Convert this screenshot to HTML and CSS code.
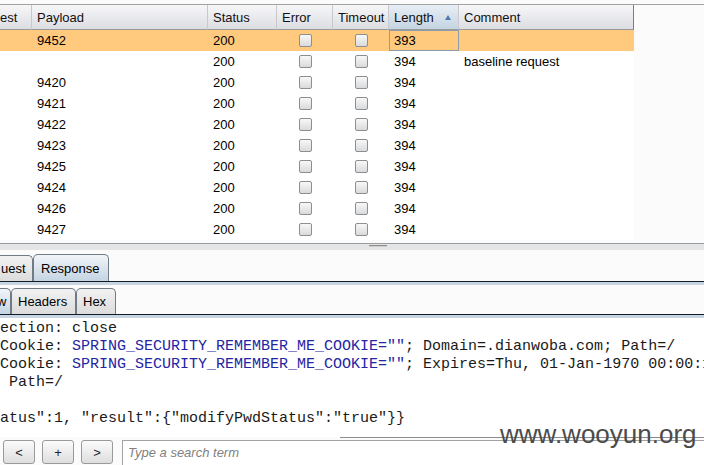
FILE: index.html
```html
<!DOCTYPE html>
<html>
<head>
<meta charset="utf-8">
<link rel="stylesheet" href="styles.css">
</head>
<body>
<div class="app">
  <div class="results">
    <div class="table-wrap">
      <div class="table">
        <div class="grid head">
          <div class="hc first">est</div>
          <div class="hc">Payload</div>
          <div class="hc">Status</div>
          <div class="hc">Error</div>
          <div class="hc">Timeout</div>
          <div class="hc sorted">Length<span class="arrow"></span></div>
          <div class="hc last">Comment</div>
        </div>
        <div class="grid row sel"><div></div><div>9452</div><div>200</div><div class="c"><span class="cb"></span></div><div class="c"><span class="cb"></span></div><div class="focus">393</div><div></div></div>
        <div class="grid row"><div></div><div></div><div>200</div><div class="c"><span class="cb"></span></div><div class="c"><span class="cb"></span></div><div>394</div><div>baseline request</div></div>
        <div class="grid row"><div></div><div>9420</div><div>200</div><div class="c"><span class="cb"></span></div><div class="c"><span class="cb"></span></div><div>394</div><div></div></div>
        <div class="grid row"><div></div><div>9421</div><div>200</div><div class="c"><span class="cb"></span></div><div class="c"><span class="cb"></span></div><div>394</div><div></div></div>
        <div class="grid row"><div></div><div>9422</div><div>200</div><div class="c"><span class="cb"></span></div><div class="c"><span class="cb"></span></div><div>394</div><div></div></div>
        <div class="grid row"><div></div><div>9423</div><div>200</div><div class="c"><span class="cb"></span></div><div class="c"><span class="cb"></span></div><div>394</div><div></div></div>
        <div class="grid row"><div></div><div>9425</div><div>200</div><div class="c"><span class="cb"></span></div><div class="c"><span class="cb"></span></div><div>394</div><div></div></div>
        <div class="grid row"><div></div><div>9424</div><div>200</div><div class="c"><span class="cb"></span></div><div class="c"><span class="cb"></span></div><div>394</div><div></div></div>
        <div class="grid row"><div></div><div>9426</div><div>200</div><div class="c"><span class="cb"></span></div><div class="c"><span class="cb"></span></div><div>394</div><div></div></div>
        <div class="grid row"><div></div><div>9427</div><div>200</div><div class="c"><span class="cb"></span></div><div class="c"><span class="cb"></span></div><div>394</div><div></div></div>
      </div>
    </div>
  </div>

  <div class="divider"><div class="bar"><span class="grip"></span></div></div>

  <div class="tabs-wrap">
    <div class="tabrow r1">
      <div class="tab cut w-uest">uest</div>
      <div class="tab on w-resp">Response</div>
    </div>
    <div class="band"></div>
  </div>

  <div class="tabs-wrap">
    <div class="tabrow r2">
      <div class="tab cut on w-raw">w</div>
      <div class="tab w-head">Headers</div>
      <div class="tab w-hex">Hex</div>
    </div>
    <div class="band"></div>
  </div>

  <div class="text">
<pre class="code">Connection: close
Set-Cookie: <span class="b">SPRING_SECURITY_REMEMBER_ME_COOKIE=""</span>; Domain=.dianwoba.com; Path=/
Set-Cookie: <span class="b">SPRING_SECURITY_REMEMBER_ME_COOKIE=""</span>; Expires=Thu, 01-Jan-1970 00:00:10 GMT;
GMT; Path=/

{"status":1, "result":{"modifyPwdStatus":"true"}}</pre>
  </div>

  <div class="bottom">
    <button class="btn">&lt;</button>
    <button class="btn">+</button>
    <button class="btn">&gt;</button>
    <div class="search">Type a search term</div>
  </div>

  <div class="wm-line"></div>
  <div class="watermark">www.wooyun.org</div>
</div>
</body>
</html>
```

FILE: styles.css
```css
* { box-sizing: border-box; margin: 0; padding: 0; }

body {
  width: 704px;
  height: 465px;
  overflow: hidden;
  background: #fbfbfb;
  font-family: "Liberation Sans", Arial, sans-serif;
  font-size: 13px;
  color: #000;
}

.app {
  position: relative;
  height: 465px;
  display: flex;
  flex-direction: column;
}

/* ---------- results table ---------- */
.results {
  flex: none;
  height: 240px;
  padding-top: 4px;
}

.table-wrap {
  border-top: 1px solid #a2a2a2;
  height: 236px;
}

.table {
  width: 634px;
  height: 235px;
  background: #fff;
}

.grid {
  display: grid;
  grid-template-columns: 32px 176px 69px 56px 56px 70px 175px;
}

.head { height: 25px; }

.hc {
  display: flex;
  align-items: center;
  padding-left: 5px;
  background: linear-gradient(#f7f7f9, #dcdde2);
  border-right: 1px solid #c8c9cc;
  border-bottom: 1px solid #9a9a9a;
  white-space: nowrap;
  overflow: hidden;
  color: #111;
}

.hc.first { padding-left: 0; }
.hc.last { border-right-color: #7d7d7d; }

.hc.sorted {
  background: linear-gradient(#e8eef5, #c5d4e2);
}

.arrow {
  margin-left: auto;
  margin-right: 7px;
  width: 0;
  height: 0;
  border-left: 3px solid transparent;
  border-right: 3px solid transparent;
  border-bottom: 5px solid #4d7cb0;
}

.row { height: 21px; }

.row > div {
  display: flex;
  align-items: center;
  padding-left: 5px;
  white-space: nowrap;
}

.row > div.c {
  justify-content: center;
  padding-left: 0;
}

.row.sel { background: #ffc97e; }

.focus { box-shadow: inset 0 0 0 1px #8d9cab; }

.cb {
  display: block;
  width: 13px;
  height: 13px;
  border: 1px solid #8d8e90;
  border-radius: 2px;
  background: linear-gradient(#f8f8f8, #d9dadc);
}

/* ---------- split divider ---------- */
.divider {
  flex: none;
  height: 10px;
  padding-top: 3px;
}

.bar {
  height: 7px;
  border-top: 1px solid #9b9b9b;
  background: #e4e5e7;
  padding-left: 369px;
  padding-top: 1px;
}

.grip {
  display: block;
  width: 18px;
  height: 2px;
  border-top: 1px solid #8a8a8a;
  border-bottom: 1px solid #d0d0d0;
}

/* ---------- tabs ---------- */
.tabs-wrap { flex: none; }

.tabrow {
  display: flex;
  align-items: flex-end;
  border-bottom: 1px solid #121a24;
}

.tabrow.r1 { height: 32px; }
.tabrow.r2 { height: 30px; }

.band {
  height: 3px;
  background: #c8d5e2;
}

.tab {
  display: flex;
  align-items: center;
  border: 1px solid #707b86;
  border-bottom: none;
  border-radius: 5px 5px 0 0;
  background: linear-gradient(#f2f2f2, #dcdcdc);
  padding-left: 6px;
  color: #000;
  white-space: nowrap;
}

.tab.on { background: linear-gradient(#f1f5f9, #c4d4e2); }

.tab.cut {
  border-left: none;
  border-top-left-radius: 0;
  padding-left: 1px;
}

.r1 .tab { height: 27px; }
.r1 .tab.cut { height: 26px; }
.r2 .tab { height: 26px; }

.w-uest { width: 33px; }
.w-resp { width: 76px; padding-left: 7px; }
.w-raw { width: 11px; padding-left: 0; overflow: hidden; text-indent: -4px; }
.w-head { width: 65px; }
.w-hex { width: 40px; }

/* ---------- text area ---------- */
.text {
  flex: none;
  height: 119px;
  padding-top: 2px;
  background: #fff;
  overflow: hidden;
}

.code {
  margin-left: -36px;
  font-family: "Liberation Mono", "Courier New", monospace;
  font-size: 15px;
  line-height: 18px;
  color: #1a1a1a;
  white-space: pre;
}

.b { color: #2424a4; }

/* ---------- bottom bar ---------- */
.bottom {
  flex: none;
  height: 28px;
  display: flex;
  align-items: flex-start;
  gap: 7px;
  padding: 3px 0 0 3px;
  background: #fbfbfb;
}

.btn {
  width: 32px;
  height: 24px;
  border: 1px solid #9a9a9a;
  border-radius: 3px;
  background: linear-gradient(#fbfbfb, #dedede);
  font-family: "Liberation Sans", Arial, sans-serif;
  font-size: 13px;
  color: #222;
}

.search {
  margin-left: 2px;
  flex: 1;
  height: 28px;
  border: 1px solid #a3a3a3;
  border-right: none;
  background: #fff;
  padding: 4px 0 0 5px;
  font-style: italic;
  color: #808080;
}

/* ---------- watermark overlay ---------- */
.wm-line {
  position: absolute;
  left: 340px;
  right: 0;
  top: 437px;
  height: 1px;
  background: #8c8c8c;
}

.watermark {
  position: absolute;
  left: 500px;
  top: 421px;
  font-family: "Liberation Sans", Arial, sans-serif;
  font-size: 26px;
  line-height: 26px;
  color: #4b4b4b;
}
```
